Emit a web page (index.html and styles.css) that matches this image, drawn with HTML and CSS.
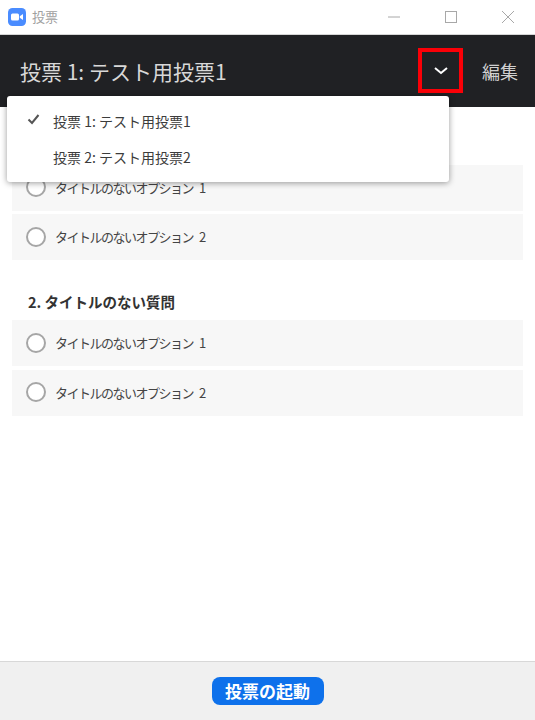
FILE: index.html
```html
<!DOCTYPE html>
<html lang="ja">
<head>
<meta charset="utf-8">
<title>投票</title>
<link rel="stylesheet" href="styles.css">
</head>
<body>
<div class="app">
  <div class="titlebar">
    <div class="title-left">
      <svg class="logo" width="18" height="18" viewBox="0 0 18 18"><rect width="18" height="18" rx="4.5" fill="#4a8cff"/><rect x="3" y="5.5" width="8" height="7" rx="1.5" fill="#fff"/><path d="M11.8 8.2 15 6v6l-3.2-2.2z" fill="#fff"/></svg>
      <span class="title-text">投票</span>
    </div>
    <div class="win-controls">
      <svg width="12" height="12" viewBox="0 0 12 12"><path d="M0 6h12" stroke="#a8a8a8" fill="none"/></svg>
      <svg width="12" height="12" viewBox="0 0 12 12"><rect x=".5" y=".5" width="11" height="11" stroke="#a8a8a8" fill="none"/></svg>
      <svg width="12" height="12" viewBox="0 0 12 12"><path d="M0 0l12 12M12 0L0 12" stroke="#a8a8a8" fill="none"/></svg>
    </div>
  </div>
  <header class="header">
    <h1 class="poll-title">投票 1: テスト用投票1</h1>
    <div class="header-actions">
      <div class="chevron-box">
        <svg width="14" height="8" viewBox="0 0 14 8"><path d="M1 1l6 5 6-5" stroke="#fff" stroke-width="2" fill="none"/></svg>
      </div>
      <span class="edit">編集</span>
    </div>
  </header>
  <main class="content">
    <section class="question">
      <div class="option"><span class="radio"></span>タイトルのないオプション 1</div>
      <div class="option"><span class="radio"></span>タイトルのないオプション 2</div>
    </section>
    <section class="question">
      <h2 class="q-title">2. タイトルのない質問</h2>
      <div class="option"><span class="radio"></span>タイトルのないオプション 1</div>
      <div class="option"><span class="radio"></span>タイトルのないオプション 2</div>
    </section>
  </main>
  <footer class="footer">
    <button class="launch">投票の起動</button>
  </footer>
  <div class="menu">
    <div class="menu-item">
      <svg class="check" width="13" height="11" viewBox="0 0 13 11"><path d="M1.5 5.5l3.5 3.5 6.5-8" stroke="#555" stroke-width="2" fill="none"/></svg>
      <span>投票 1: テスト用投票1</span>
    </div>
    <div class="menu-item"><span class="check"></span><span>投票 2: テスト用投票2</span></div>
  </div>
</div>
</body>
</html>
```
FILE: styles.css
```css
* { box-sizing: border-box; }
html, body { margin: 0; padding: 0; }
body {
  font-family: "Noto Sans CJK JP", "Open Sans", sans-serif;
  background: #fff;
}
.app {
  position: relative;
  width: 535px;
  height: 720px;
  display: flex;
  flex-direction: column;
  overflow: hidden;
}
.titlebar {
  height: 35px;
  flex: none;
  display: flex;
  align-items: center;
  justify-content: space-between;
  padding: 0 21px 1px 8px;
  background: #fff;
  border-bottom: 1px solid #d6d6d6;
}
.title-left { display: flex; align-items: center; gap: 6px; }
.logo { display: block; }
.title-text { font-size: 13px; color: #a0a0a0; }
.win-controls { display: flex; align-items: center; gap: 45px; }
.win-controls svg { display: block; }
.header {
  height: 72px;
  flex: none;
  background: #202124;
  display: flex;
  align-items: center;
  justify-content: space-between;
  padding: 0 17px 1px 20px;
}
.poll-title {
  margin: 0;
  font-size: 21px;
  font-weight: 400;
  color: #d8d8d8;
}
.header-actions { display: flex; align-items: center; gap: 19px; }
.chevron-box {
  width: 45px;
  height: 45px;
  border: 4px solid #fb0007;
  display: flex;
  align-items: center;
  justify-content: center;
}
.edit { font-size: 18px; color: #d0d0d0; }
.content {
  flex: 1;
  padding: 57.6px 12px 0;
  display: flex;
  flex-direction: column;
  gap: 29.9px;
}
.question {
  display: flex;
  flex-direction: column;
  gap: 3.5px;
}
.q-title {
  margin: 0 0 2.6px 16px;
  height: 24px;
  line-height: 24px;
  font-size: 14.5px;
  font-weight: 700;
  color: #333;
}
.option {
  height: 46px;
  background: #f7f7f7;
  display: flex;
  align-items: center;
  gap: 9px;
  padding: 0 0 1px 14px;
  font-size: 13px;
  letter-spacing: -1.5px;
  word-spacing: 4.5px;
  color: #444;
}
.radio {
  width: 20px;
  height: 20px;
  border-radius: 50%;
  border: 2px solid #a6a6a6;
  background: #fff;
  flex: none;
}
.footer {
  height: 59px;
  flex: none;
  background: #f0f0f0;
  border-top: 1px solid #d8d8d8;
  display: flex;
  align-items: center;
  justify-content: center;
}
.launch {
  width: 112px;
  height: 28px;
  padding: 0;
  border: none;
  border-radius: 8px;
  background: #0e71eb;
  color: #fff;
  font-family: inherit;
  font-size: 17px;
  font-weight: 700;
  line-height: 28px;
}
.menu {
  position: absolute;
  left: 7px;
  top: 96px;
  width: 442px;
  height: 86px;
  background: #fff;
  border-radius: 3px;
  box-shadow: 0 1px 6px rgba(0, 0, 0, 0.4);
  padding-top: 7px;
}
.menu-item {
  height: 36px;
  display: flex;
  align-items: center;
  gap: 13px;
  padding-left: 20px;
  font-size: 14px;
  color: #3c3c3c;
}
.check { width: 13px; flex: none; display: block; margin-top: -4px; }
```
